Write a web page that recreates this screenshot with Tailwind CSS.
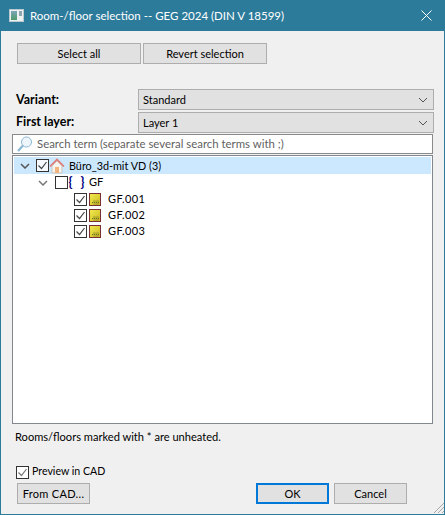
<!DOCTYPE html>
<html lang="en">
<head>
  <meta charset="UTF-8">
  <title>Room-/floor selection</title>
  <script src="https://cdn.jsdelivr.net/npm/@tailwindcss/browser@4"></script>
</head>
<body class="w-[445px] h-[515px] overflow-hidden bg-[#f0f0f0] font-['Lato','Liberation_Sans',sans-serif] text-[11px] text-black">
  <div class="relative flex flex-col h-[515px] border border-t-0 border-[#2d7b9b]">
    <!-- Title bar -->
    <div class="flex items-center h-[31px] shrink-0 -mx-px bg-[#2d7b9b] text-white text-[11.5px]">
      <svg class="ml-[9px] mr-[6px]" width="15" height="13" viewBox="0 0 15 13">
        <defs><linearGradient id="pane" x1="0" y1="0" x2="0" y2="1"><stop offset="0" stop-color="#7fa6b8"/><stop offset="1" stop-color="#4f9a6c"/></linearGradient></defs>
        <rect x="0.5" y="0.5" width="14" height="12" fill="#eef1f1" stroke="#b9c9cf"/>
        <rect x="2" y="2" width="6" height="9" fill="url(#pane)"/>
        <rect x="10" y="2" width="3" height="5" fill="#8fa5ad"/>
      </svg>
      <span>Room-/floor selection -- GEG 2024 (DIN V 18599)</span>
      <svg class="ml-auto mr-[13px]" width="11" height="11" viewBox="0 0 11 11" fill="none" stroke="#fff" stroke-width="1">
        <path d="M0.5 0.5L10.5 10.5M10.5 0.5L0.5 10.5"/>
      </svg>
    </div>

    <!-- Top buttons -->
    <div class="flex gap-[2px] mt-[12px] ml-[16px]">
      <button class="w-[124px] h-[21px] pt-px bg-[#e1e1e1] border border-[#adadad]">Select all</button>
      <button class="w-[124px] h-[21px] pt-px bg-[#e1e1e1] border border-[#adadad]">Revert selection</button>
    </div>

    <!-- Combos -->
    <div class="flex items-center mt-[25px] ml-[15px] mr-[10px]">
      <span class="w-[122px] pt-[2px] font-bold text-[12.5px]">Variant:</span>
      <div class="flex-1 flex items-center justify-between h-[21px] px-[4px] bg-[#e1e1e1] border border-[#adadad]">
        <span class="pt-px">Standard</span>
        <svg class="mr-[1px]" width="10" height="6" viewBox="0 0 10 6" fill="none" stroke="#555" stroke-width="1"><path d="M1 1L5 5L9 1"/></svg>
      </div>
    </div>
    <div class="flex items-center mt-[2px] ml-[15px] mr-[10px]">
      <span class="w-[122px] font-bold text-[12.5px]">First layer:</span>
      <div class="flex-1 flex items-center justify-between h-[21px] px-[4px] bg-[#e1e1e1] border border-[#adadad]">
        <span class="pt-px">Layer 1</span>
        <svg class="mr-[1px]" width="10" height="6" viewBox="0 0 10 6" fill="none" stroke="#555" stroke-width="1"><path d="M1 1L5 5L9 1"/></svg>
      </div>
    </div>

    <!-- Search -->
    <div class="flex items-center h-[20px] mt-[1px] mx-[11px] bg-white border border-[#8a8a8a]">
      <svg class="ml-[3px] mr-[4px]" width="17" height="17" viewBox="0 0 17 17" fill="none">
        <circle cx="10.5" cy="6" r="5" fill="#eef6fb" stroke="#8db8d4"/>
        <path d="M7 9.5L2 15" stroke="#8db8d4" stroke-width="2.2"/>
      </svg>
      <span class="text-[#5f5f5f] text-[11.4px]">Search term (separate several search terms with ;)</span>
    </div>

    <!-- Tree -->
    <div class="h-[269px] mt-[1px] mx-[11px] p-px bg-white border border-[#828790]">
      <div class="flex items-center h-[17px] bg-[#cce8ff]">
        <svg class="ml-[6px] mr-[6px]" width="10" height="6" viewBox="0 0 10 6" fill="none" stroke="#555" stroke-width="1.5"><path d="M1 1L5 5L9 1"/></svg>
        <span class="flex items-center justify-center w-[13px] h-[13px] bg-[#f4fafe] border border-[#333]">
          <svg width="11" height="11" viewBox="0 0 11 11" fill="none" stroke="#444" stroke-width="1.2"><path d="M1.5 5.5L4.5 8.5L9.5 2"/></svg>
        </span>
        <svg width="16" height="16" viewBox="0 0 16 16">
          <path d="M3 8V15H13V8L8 3Z" fill="#f7f3ee" stroke="#c9c4bb"/>
          <rect x="6" y="9" width="4" height="6" fill="#f2b47c"/>
          <path d="M1 8.5L8 1.5L15 8.5" fill="none" stroke="#e07a78" stroke-width="1.6"/>
        </svg>
        <span class="ml-[4px] pt-px text-[10.8px]">Büro_3d-mit VD (3)</span>
      </div>
      <div class="flex items-center h-[15px] mt-[1px]">
        <svg class="ml-[24px] mr-[7px]" width="10" height="6" viewBox="0 0 10 6" fill="none" stroke="#777" stroke-width="1.5"><path d="M1 1L5 5L9 1"/></svg>
        <span class="w-[13px] h-[13px] bg-white border border-[#333]"></span>
        <span class="w-[5px] text-center font-bold text-[#00007f] text-[13px] leading-[15px]">{</span>
        <span class="w-[7px] ml-[6px] text-center font-bold text-[#00007f] text-[13px] leading-[15px]">}</span>
        <span class="ml-[3px]">GF</span>
      </div>
      <div class="flex items-center h-[16px] mt-[1px] ml-[60px]">
        <span class="flex items-center justify-center w-[13px] h-[13px] bg-white border border-[#333]">
          <svg width="11" height="11" viewBox="0 0 11 11" fill="none" stroke="#444" stroke-width="1.2"><path d="M1.5 5.5L4.5 8.5L9.5 2"/></svg>
        </span>
        <svg class="ml-[2px]" width="12" height="13" viewBox="0 0 12 13">
          <defs><linearGradient id="room" x1="0" y1="0" x2="1" y2="1"><stop offset="0" stop-color="#f2ec50"/><stop offset="1" stop-color="#c8b820"/></linearGradient></defs>
          <rect x="0.5" y="0.5" width="11" height="12" fill="url(#room)" stroke="#7a2f35"/>
          <path d="M5 11.5V7M7 11.5V7M9 11.5V7M3 9.5H10" stroke="#6e6a20" stroke-width="1" stroke-dasharray="1 1"/>
        </svg>
        <span class="ml-[7px] tracking-[0.4px]">GF.001</span>
      </div>
      <div class="flex items-center h-[16px] ml-[60px]">
        <span class="flex items-center justify-center w-[13px] h-[13px] bg-white border border-[#333]">
          <svg width="11" height="11" viewBox="0 0 11 11" fill="none" stroke="#444" stroke-width="1.2"><path d="M1.5 5.5L4.5 8.5L9.5 2"/></svg>
        </span>
        <svg class="ml-[2px]" width="12" height="13" viewBox="0 0 12 13">
          <rect x="0.5" y="0.5" width="11" height="12" fill="url(#room)" stroke="#7a2f35"/>
          <path d="M5 11.5V7M7 11.5V7M9 11.5V7M3 9.5H10" stroke="#6e6a20" stroke-width="1" stroke-dasharray="1 1"/>
        </svg>
        <span class="ml-[7px] tracking-[0.4px]">GF.002</span>
      </div>
      <div class="flex items-center h-[16px] ml-[60px]">
        <span class="flex items-center justify-center w-[13px] h-[13px] bg-white border border-[#333]">
          <svg width="11" height="11" viewBox="0 0 11 11" fill="none" stroke="#444" stroke-width="1.2"><path d="M1.5 5.5L4.5 8.5L9.5 2"/></svg>
        </span>
        <svg class="ml-[2px]" width="12" height="13" viewBox="0 0 12 13">
          <rect x="0.5" y="0.5" width="11" height="12" fill="url(#room)" stroke="#7a2f35"/>
          <path d="M5 11.5V7M7 11.5V7M9 11.5V7M3 9.5H10" stroke="#6e6a20" stroke-width="1" stroke-dasharray="1 1"/>
        </svg>
        <span class="ml-[7px] tracking-[0.4px]">GF.003</span>
      </div>
    </div>

    <p class="mt-[5px] ml-[14px] leading-[16px] text-[11.1px]">Rooms/floors marked with * are unheated.</p>

    <!-- Preview -->
    <div class="flex items-center mt-[19px] ml-[15px] h-[16px]">
      <span class="flex items-center justify-center w-[13px] h-[13px] bg-white border border-[#333]">
        <svg width="11" height="11" viewBox="0 0 11 11" fill="none" stroke="#777" stroke-width="1.2"><path d="M1.5 5.5L4.5 8.5L9.5 2"/></svg>
      </span>
      <span class="ml-[3px] text-[10.6px]">Preview in CAD</span>
    </div>

    <!-- Bottom buttons -->
    <div class="flex mt-[3px] ml-[16px]">
      <button class="w-[73px] h-[21px] pt-px bg-[#e1e1e1] border border-[#adadad] tracking-[0.3px]">From CAD...</button>
      <button class="w-[73px] h-[21px] pt-px ml-[166px] bg-[#e1e1e1] border-2 border-[#0078d7]">OK</button>
      <button class="w-[73px] h-[21px] pt-px ml-[5px] bg-[#e1e1e1] border border-[#adadad]">Cancel</button>
    </div>

    <!-- Resize grip -->
    <svg class="absolute right-0 bottom-[1px]" width="11" height="11" viewBox="0 0 11 11" fill="none" stroke="#a8a8a8" stroke-width="1">
      <path d="M1 11L11 1M5 11L11 5M9 11L11 9"/>
    </svg>
  </div>
</body>
</html>
